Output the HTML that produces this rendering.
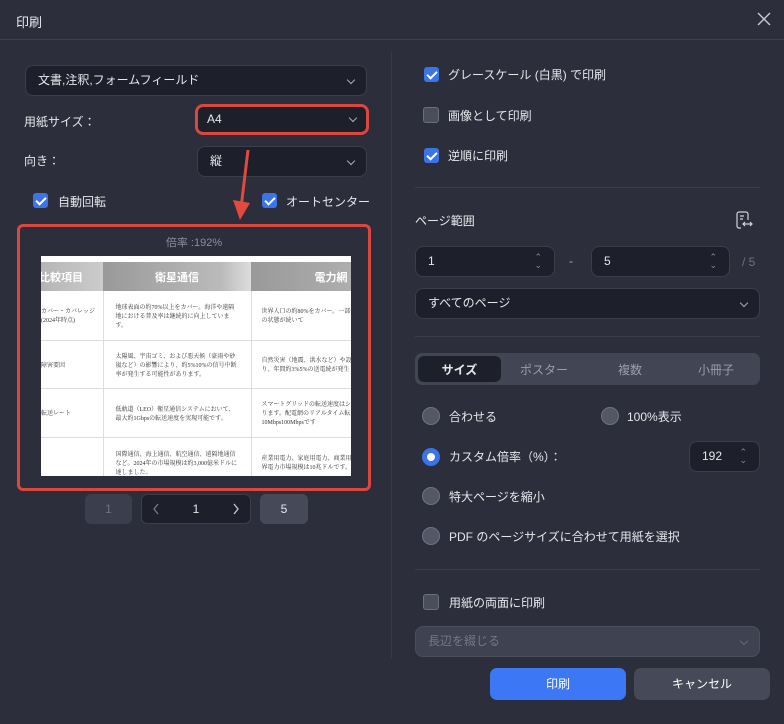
<!DOCTYPE html>
<html><head><meta charset="utf-8"><style>
*{box-sizing:border-box;margin:0;padding:0}
body{width:784px;height:724px;background:#2c2e3b;font-family:"Liberation Sans","Noto Sans CJK JP",sans-serif;color:#e6e7ec;font-size:12px;position:relative;overflow:hidden}
.a{position:absolute}
.hdr{left:0;top:0;width:784px;height:40px;border-bottom:1px solid #3d404d}
.sel{position:absolute;background:#1d1f2b;border:1px solid #3a3d4a;border-radius:8px;height:31px;padding-left:12px;line-height:29px;font-size:12px;color:#e6e7ec}
.chev{position:absolute;right:12px;top:11px;width:6px;height:6px;border-right:1.3px solid #aab;border-bottom:1.3px solid #aab;transform:rotate(45deg)}
.cb{position:absolute;width:15px;height:15px;border-radius:3px;background:#3b73e8}
.cb::after{content:"";position:absolute;left:5px;top:2px;width:4px;height:8px;border-right:2px solid #fff;border-bottom:2px solid #fff;transform:rotate(45deg)}
.cbo{position:absolute;width:16px;height:16px;border-radius:3px;background:#4a4d5c;border:1px solid #6b6e7c}
.lbl{position:absolute;font-size:12px;color:#e6e7ec;white-space:nowrap}
.rd{position:absolute;width:18px;height:18px;border-radius:50%;background:#545766;border:1px solid #6e7180}
.rdo{position:absolute;width:18px;height:18px;border-radius:50%;background:#3b73e8}
.rdo::after{content:"";position:absolute;left:5px;top:5px;width:8px;height:8px;border-radius:50%;background:#fff}
.hr{position:absolute;height:1px;background:#3a3d4a}
.spin{position:absolute;font-size:9px;color:#888b98;line-height:8px}
table{border-collapse:collapse;font-size:6px;color:#333;font-family:"Liberation Serif","Noto Serif CJK SC",serif}
</style></head><body>
<div class="a hdr"></div>
<div class="lbl" style="left:16px;top:12px;font-size:13px">印刷</div>
<svg class="a" style="left:757px;top:12px" width="14" height="14"><path d="M1 1L13 13M13 1L1 13" stroke="#c8cad2" stroke-width="1.4"/></svg>
<div class="a" style="left:391px;top:52px;width:1px;height:606px;background:#363946"></div>

<div class="sel" style="left:25px;top:65px;width:342px">文書,注釈,フォームフィールド<span class="chev"></span></div>
<div class="lbl" style="left:24px;top:113px">用紙サイズ：</div>
<div class="sel" style="left:195px;top:104px;width:174px;border:3px solid #d9473f;line-height:25px;padding-left:9px">A4<span class="chev" style="right:10px;top:8px"></span></div>
<div class="lbl" style="left:24px;top:152px">向き：</div>
<div class="sel" style="left:197px;top:146px;width:170px">縦<span class="chev"></span></div>
<div class="cb" style="left:33px;top:193px"></div><div class="lbl" style="left:58px;top:193px">自動回転</div>
<div class="cb" style="left:262px;top:193px"></div><div class="lbl" style="left:286px;top:193px">オートセンター</div>
<svg class="a" style="left:228px;top:148px" width="30" height="76"><path d="M20 2L13 60" stroke="#e04a40" stroke-width="3"/><path d="M5 52L12 72L22 55Z" fill="#e04a40"/></svg>

<div class="a" style="left:17px;top:224px;width:354px;height:267px;border:3px solid #d9473f;border-radius:6px"></div>
<div class="lbl" style="left:0;width:388px;text-align:center;top:234px;color:#8b8e9a;font-size:11px">倍率 :192%</div>
<div class="a" style="left:41px;top:256px;width:310px;height:220px;background:#fff;overflow:hidden">
<table style="position:absolute;left:-30px;top:6px;width:400px">
<tr style="height:29px;color:#fff;font-size:11px;font-weight:bold;font-family:'Liberation Sans','Noto Sans CJK JP',sans-serif">
<td style="width:92px;background:linear-gradient(90deg,#aaa,#ccc);padding-left:28px">比較項目</td>
<td style="width:148px;background:linear-gradient(90deg,#999,#bbb 80%,#ddd);text-align:center">衛星通信</td>
<td style="background:linear-gradient(90deg,#999,#bbb);text-align:center">電力網</td></tr>
<tr style="height:49px;border-bottom:1px solid #ddd"><td style="padding-left:30px">カバー・カバレッジ<br>(2024年時点)</td><td style="border-left:1px solid #ddd;padding:0 12px">地球表面の約70%以上をカバー。海洋や遠隔地における普及率は継続的に向上しています。</td><td style="border-left:1px solid #ddd;padding:0 10px">世界人口の約80%をカバー。一部依然として未整備の状態が続いて</td></tr>
<tr style="height:48px;border-bottom:1px solid #ddd"><td style="padding-left:30px">障害要因</td><td style="border-left:1px solid #ddd;padding:0 12px">太陽風、宇宙ゴミ、および悪天候（豪雨や砂嵐など）の影響により、約5%10%の信号中断率が発生する可能性があります。</td><td style="border-left:1px solid #ddd;padding:0 10px">自然災害（地震、洪水など）や設備の老朽化により、年間約3%5%の送電続が発生しています。</td></tr>
<tr style="height:49px;border-bottom:1px solid #ddd"><td style="padding-left:30px">転送レート</td><td style="border-left:1px solid #ddd;padding:0 12px">低軌道（LEO）衛星通信システムにおいて、最大約1Gbpsの転送速度を実現可能です。</td><td style="border-left:1px solid #ddd;padding:0 10px">スマートグリッドの転送速度はシステムにより異なります。配電網のリアルタイム転送速度は約10Mbps100Mbpsです</td></tr>
<tr style="height:50px"><td></td><td style="border-left:1px solid #ddd;padding:0 12px">国際通信、海上通信、航空通信、遠隔地通信など。2024年の市場規模は約3,000億米ドルに達しました。</td><td style="border-left:1px solid #ddd;padding:0 10px">産業用電力、家庭用電力、商業用電力。2024年の世界電力市場規模は10兆ドルです。</td></tr>
</table></div>

<div class="a" style="left:85px;top:494px;width:47px;height:30px;border-radius:6px;background:#3b3e4c;color:#6e7180;text-align:center;line-height:30px">1</div>
<div class="a" style="left:141px;top:494px;width:110px;height:30px;border-radius:6px;background:#1d1f2b;border:1px solid #3a3d4a;text-align:center;line-height:28px">1</div>
<svg class="a" style="left:152px;top:503px" width="8" height="12"><path d="M6 1L2 6L6 11" stroke="#777a88" fill="none" stroke-width="1.3"/></svg>
<svg class="a" style="left:232px;top:503px" width="8" height="12"><path d="M2 1L6 6L2 11" stroke="#c8cad2" fill="none" stroke-width="1.3"/></svg>
<div class="a" style="left:260px;top:494px;width:48px;height:30px;border-radius:6px;background:#464957;text-align:center;line-height:30px">5</div>

<div class="cb" style="left:424px;top:67px"></div><div class="lbl" style="left:448px;top:66px">グレースケール (白黒) で印刷</div>
<div class="cbo" style="left:423px;top:107px"></div><div class="lbl" style="left:448px;top:107px">画像として印刷</div>
<div class="cb" style="left:424px;top:148px"></div><div class="lbl" style="left:448px;top:147px">逆順に印刷</div>
<div class="hr" style="left:415px;top:187px;width:345px"></div>
<div class="lbl" style="left:415px;top:212px">ページ範囲</div>
<svg class="a" style="left:734px;top:210px" width="20" height="20"><path d="M12 2H5a2 2 0 0 0-2 2v12a2 2 0 0 0 2 2h2M12 2a2 2 0 0 1 2 2v6M6 6h4M6 9h3M9 14h9M16 12l2 2-2 2M11 12l-2 2 2 2" stroke="#d0d2da" fill="none" stroke-width="1.2"/></svg>
<div class="sel" style="left:415px;top:246px;width:140px">1<span class="spin" style="right:12px;top:6px">⌃<br>⌄</span></div>
<div class="lbl" style="left:569px;top:254px;color:#aaa">-</div>
<div class="sel" style="left:591px;top:246px;width:139px">5<span class="spin" style="right:12px;top:6px">⌃<br>⌄</span></div>
<div class="lbl" style="left:742px;top:255px;color:#6e7180">/ 5</div>
<div class="sel" style="left:415px;top:288px;width:345px">すべてのページ<span class="chev"></span></div>
<div class="hr" style="left:415px;top:336px;width:345px"></div>
<div class="a" style="left:415px;top:353px;width:345px;height:32px;border-radius:7px;background:#424553"></div>
<div class="a" style="left:418px;top:356px;width:83px;height:26px;border-radius:6px;background:#1d1f2b"></div>
<div class="lbl" style="left:418px;width:83px;text-align:center;top:361px;font-weight:bold">サイズ</div>
<div class="lbl" style="left:501px;width:86px;text-align:center;top:361px;color:#9a9da9">ポスター</div>
<div class="lbl" style="left:587px;width:86px;text-align:center;top:361px;color:#9a9da9">複数</div>
<div class="lbl" style="left:673px;width:86px;text-align:center;top:361px;color:#9a9da9">小冊子</div>
<div class="rd" style="left:422px;top:407px"></div><div class="lbl" style="left:449px;top:408px">合わせる</div>
<div class="rd" style="left:601px;top:407px"></div><div class="lbl" style="left:627px;top:408px">100%表示</div>
<div class="rdo" style="left:422px;top:448px"></div><div class="lbl" style="left:449px;top:448px">カスタム倍率（%）：</div>
<div class="sel" style="left:689px;top:441px;width:71px">192<span class="spin" style="right:12px;top:6px">⌃<br>⌄</span></div>
<div class="rd" style="left:422px;top:487px"></div><div class="lbl" style="left:449px;top:488px">特大ページを縮小</div>
<div class="rd" style="left:422px;top:527px"></div><div class="lbl" style="left:449px;top:528px">PDF のページサイズに合わせて用紙を選択</div>
<div class="hr" style="left:415px;top:569px;width:345px"></div>
<div class="cbo" style="left:423px;top:594px"></div><div class="lbl" style="left:449px;top:594px">用紙の両面に印刷</div>
<div class="sel" style="left:415px;top:626px;width:345px;background:#3f4250;border-color:#4b4e5b;color:#747784">長辺を綴じる<span class="chev" style="border-color:#666"></span></div>
<div class="a" style="left:490px;top:668px;width:136px;height:32px;border-radius:7px;background:#3c78f6;text-align:center;line-height:32px;color:#fff">印刷</div>
<div class="a" style="left:634px;top:668px;width:136px;height:32px;border-radius:7px;background:#464957;text-align:center;line-height:32px;color:#fff">キャンセル</div>
</body></html>
